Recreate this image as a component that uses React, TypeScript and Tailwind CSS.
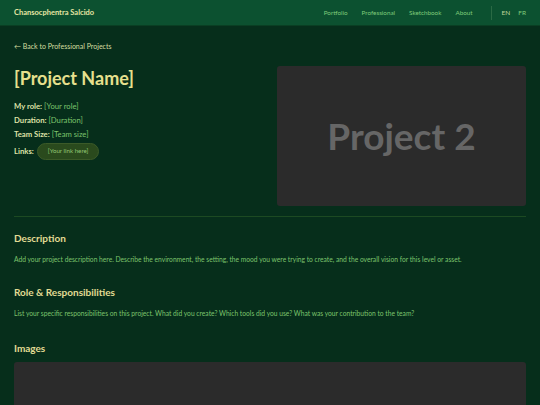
import React from 'react';

const navLinks = ['Portfolio', 'Professional', 'Sketchbook', 'About'];

const details = [
  { label: 'My role:', value: '[Your role]' },
  { label: 'Duration:', value: '[Duration]' },
  { label: 'Team Size:', value: '[Team size]' },
];

const sections = [
  {
    title: 'Description',
    text: 'Add your project description here. Describe the environment, the setting, the mood you were trying to create, and the overall vision for this level or asset.',
  },
  {
    title: 'Role & Responsibilities',
    text: 'List your specific responsibilities on this project. What did you create? Which tools did you use? What was your contribution to the team?',
  },
];

const App = () => {
  return (
    <div className="min-h-[405px] bg-[#062e1b] font-['Lato','Noto_Sans',sans-serif] text-[#e4e29c]">
      {/* header */}
      <header className="flex h-[26px] items-center justify-between border-b border-[#0a3f23] bg-[#0c5130] px-[14px]">
        <span className="text-[7.5px] font-bold text-[#e6e6a4]">Chansocphentra Salcido</span>
        <div className="flex items-center">
          <nav className="flex gap-[14px] text-[6.3px] text-[#7fcb7a]">
            {navLinks.map((l) => (
              <a key={l}>{l}</a>
            ))}
          </nav>
          <div className="ml-[18px] mr-[10px] h-[14px] w-px bg-[#2a6a44]" />
          <div className="flex gap-[8px] text-[6.5px]">
            <span className="text-[#bfd69a]">EN</span>
            <span className="text-[#7fcb7a]">FR</span>
          </div>
        </div>
      </header>

      <main className="px-[14px]">
        <a className="mt-[15px] block text-[7px] text-[#d6dea0]">← Back to Professional Projects</a>

        {/* top */}
        <div className="mt-[13px] flex gap-[24px] pb-[10px]">
          <div className="flex-1 pt-[1px]">
            <h1 className="text-[18px] font-bold leading-[24px] text-[#e6e08e]">[Project Name]</h1>
            <div className="mt-[11px] flex flex-col gap-[4px] text-[7.7px] leading-[10px]">
              {details.map((d) => (
                <div key={d.label}>
                  <span className="font-bold text-[#dfe2a8]">{d.label}</span>{' '}
                  <span className="text-[#7cc46c]">{d.value}</span>
                </div>
              ))}
              <div className="flex items-center gap-[3px]">
                <span className="font-bold text-[#dfe2a8]">Links:</span>
                <span className="flex h-[17px] items-center rounded-full border border-[#3b5a28] bg-[#2a4a1d] px-[10px] text-[6.2px] text-[#93c874]">
                  [Your link here]
                </span>
              </div>
            </div>
          </div>
          <div className="mt-[1px] flex h-[140px] w-[249px] items-center justify-center rounded-[3px] bg-[#2b2b2b]">
            <span className="text-[37px] font-bold text-[#666666]">Project 2</span>
          </div>
        </div>

        <div className="h-px bg-[#1c4a22]" />

        {sections.map((s) => (
          <section key={s.title} className="mt-[14px] mb-[21px]">
            <h2 className="text-[10px] font-bold text-[#e2dc94]">{s.title}</h2>
            <p className="mt-[8px] text-[6.7px] text-[#7cc46c]">{s.text}</p>
          </section>
        ))}

        <section className="mt-[23px]">
          <h2 className="text-[10px] font-bold text-[#e2dc94]">Images</h2>
          <div className="mt-[6px] h-[60px] rounded-[3px] bg-[#2b2b2b]" />
        </section>
      </main>
    </div>
  );
};

export default App;
